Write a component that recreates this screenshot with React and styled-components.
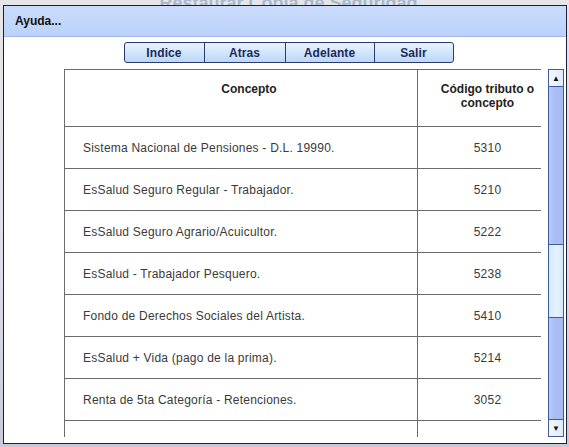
import React from "react";
import styled, { createGlobalStyle } from "styled-components";

const Global = createGlobalStyle`
    html, body {
        margin: 0;
        padding: 0;
        background: #dfe0e8;
        font-family: "Liberation Sans", Arial, sans-serif;
    }
`;

const Page = styled.div`
    width: 569px;
    height: 447px;
    overflow: hidden;
    background: linear-gradient(to bottom, #e6e6e8 0%, #dcdde8 60%, #c9cad9 100%);
`;

// titulo de la pantalla que queda detras del dialogo
const BackTitle = styled.div`
    height: 5px;
    overflow: hidden;
    text-align: center;
    padding-left: 8px;
    div {
        margin-top: -7px;
        font-size: 18px;
        font-weight: bold;
        color: #a9b7cf;
        line-height: 20px;
    }
`;

const Win = styled.div`
    margin-left: 3px;
    width: 562px;
    height: 437px;
    border: 1px solid #1c1c3c;
    background: #fff;
    display: flex;
    flex-direction: column;
    overflow: hidden;
`;

const TitleBar = styled.div`
    height: 30px;
    flex: none;
    border-bottom: 1px solid #9fb6e6;
    background: linear-gradient(to bottom, #cadcfd, #bcd2f9);
    display: flex;
    align-items: center;
    padding-left: 11px;
    font-size: 12px;
    font-weight: bold;
    color: #111;
`;

const Toolbar = styled.div`
    display: flex;
    justify-content: center;
    padding: 5px 0 0 8px;
`;

const NavButton = styled.button`
    width: ${(p) => p.$w}px;
    height: 21px;
    margin: 0;
    margin-left: -1px;
    padding: 0;
    border: 1px solid #2b3b6b;
    background: linear-gradient(to bottom, #e8f3ff 0%, #d2e6fd 50%, #bcd6f8 100%);
    font-family: "Liberation Sans", Arial, sans-serif;
    font-size: 12px;
    font-weight: bold;
    letter-spacing: 0.1px;
    color: #1b2a5a;
    &:first-child {
        border-radius: 3px 0 0 3px;
    }
    &:last-child {
        border-radius: 0 3px 3px 0;
    }
`;

const Body = styled.div`
    display: flex;
    gap: 7px;
    padding: 6px 0 0 60px;
    height: 368px;
`;

const Viewport = styled.div`
    width: 477px;
    height: 368px;
    overflow: hidden;
`;

const Table = styled.table`
    width: 477px;
    border-collapse: collapse;
    table-layout: fixed;
    font-size: 12px;
    color: #3a3a3a;
`;

const Th = styled.th`
    border: 1px solid #6b6b6b;
    height: 57px;
    box-sizing: border-box;
    vertical-align: top;
    padding: 12px 0 0 16px;
    font-weight: bold;
    line-height: 14px;
    color: #222;
    text-align: center;
`;

const Td = styled.td`
    border: 1px solid #6b6b6b;
    height: 42px;
    box-sizing: border-box;
    padding: ${(p) => (p.$code ? "0 0 0 16px" : "0 0 0 18px")};
    text-align: ${(p) => (p.$code ? "center" : "left")};
    letter-spacing: 0.22px;
    white-space: nowrap;
    overflow: hidden;
`;

const Scrollbar = styled.div`
    width: 16px;
    height: 368px;
    box-sizing: border-box;
    border: 1px solid #3d5b98;
    background: linear-gradient(to right, #b9cbf7 0%, #a8bdf4 40%, #a6bbf3 100%);
    display: flex;
    flex-direction: column;
`;

const Arrow = styled.div`
    height: 16px;
    flex: none;
    background: linear-gradient(to right, #f4f8ff, #dfeafc);
    border-${(p) => (p.$down ? "top" : "bottom")}: 1px solid #3d5b98;
    display: flex;
    align-items: center;
    justify-content: center;
    font-size: 8px;
    color: #111;
    margin-top: ${(p) => (p.$down ? "auto" : "0")};
`;

const Thumb = styled.div`
    height: 72px;
    margin-top: 157px;
    border-top: 1px solid #3d5b98;
    border-bottom: 1px solid #3d5b98;
    background: linear-gradient(to right, #d6eaff 0%, #e6f3ff 60%, #d2e5fc 100%);
`;

const buttons = [
    { label: "Indice", w: 81 },
    { label: "Atras", w: 82 },
    { label: "Adelante", w: 90 },
    { label: "Salir", w: 80 },
];

const rows = [
    ["Sistema Nacional de Pensiones - D.L. 19990.", "5310"],
    ["EsSalud Seguro Regular - Trabajador.", "5210"],
    ["EsSalud Seguro Agrario/Acuicultor.", "5222"],
    ["EsSalud - Trabajador Pesquero.", "5238"],
    ["Fondo de Derechos Sociales del Artista.", "5410"],
    ["EsSalud + Vida (pago de la prima).", "5214"],
    ["Renta de 5ta Categoría - Retenciones.", "3052"],
    ["Contribución Solidaria para la Asistencia Previsional.", "5313"],
];

function App() {
    return (
        <Page>
            <Global />
            <BackTitle>
                <div>Restaurar Copia de Seguridad</div>
            </BackTitle>
            <Win>
                <TitleBar>Ayuda...</TitleBar>
                <Toolbar>
                    {buttons.map((b) => (
                        <NavButton key={b.label} $w={b.w}>
                            {b.label}
                        </NavButton>
                    ))}
                </Toolbar>
                <Body>
                    <Viewport>
                        <Table>
                            <colgroup>
                                <col style={{ width: 353 }} />
                                <col style={{ width: 124 }} />
                            </colgroup>
                            <thead>
                                <tr>
                                    <Th>Concepto</Th>
                                    <Th>
                                        Código tributo o
                                        <br />
                                        concepto
                                    </Th>
                                </tr>
                            </thead>
                            <tbody>
                                {rows.map(([name, code]) => (
                                    <tr key={code}>
                                        <Td>{name}</Td>
                                        <Td $code>{code}</Td>
                                    </tr>
                                ))}
                            </tbody>
                        </Table>
                    </Viewport>
                    <Scrollbar>
                        <Arrow>▲</Arrow>
                        <Thumb />
                        <Arrow $down>▼</Arrow>
                    </Scrollbar>
                </Body>
            </Win>
        </Page>
    );
}

export default App;
